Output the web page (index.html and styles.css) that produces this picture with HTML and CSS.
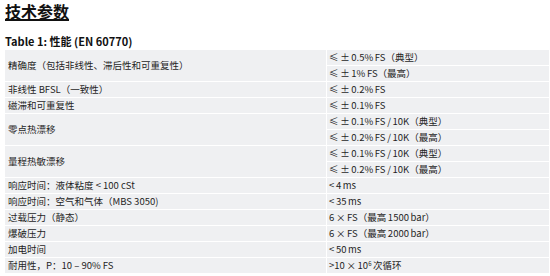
FILE: index.html
```html
<!DOCTYPE html>
<html lang="zh">
<head>
<meta charset="utf-8">
<link rel="stylesheet" href="styles.css">
</head>
<body>
<h1 class="title">技术参数</h1>
<h2 class="caption">Table 1: 性能 (EN 60770)</h2>
<table class="spec">
  <tbody>
    <tr><td class="name" rowspan="2">精确度（包括非线性、滞后性和可重复性）</td><td class="val">≤ ± 0.5% FS（典型）</td></tr>
    <tr><td class="val">≤ ± 1% FS（最高）</td></tr>
    <tr><td class="name">非线性 BFSL（一致性）</td><td class="val">≤ ± 0.2% FS</td></tr>
    <tr><td class="name">磁滞和可重复性</td><td class="val">≤ ± 0.1% FS</td></tr>
    <tr><td class="name" rowspan="2">零点热漂移</td><td class="val">≤ ± 0.1% FS / 10K（典型）</td></tr>
    <tr><td class="val">≤ ± 0.2% FS / 10K（最高）</td></tr>
    <tr><td class="name" rowspan="2">量程热敏漂移</td><td class="val">≤ ± 0.1% FS / 10K（典型）</td></tr>
    <tr><td class="val">≤ ± 0.2% FS / 10K（最高）</td></tr>
    <tr><td class="name">响应时间：液体粘度 &lt; 100 cSt</td><td class="val">&lt; 4 ms</td></tr>
    <tr><td class="name">响应时间：空气和气体（MBS 3050)</td><td class="val">&lt; 35 ms</td></tr>
    <tr><td class="name">过载压力（静态）</td><td class="val">6 × FS（最高 1500 bar）</td></tr>
    <tr><td class="name">爆破压力</td><td class="val">6 × FS（最高 2000 bar）</td></tr>
    <tr><td class="name">加电时间</td><td class="val">&lt; 50 ms</td></tr>
    <tr><td class="name">耐用性，P：10 – 90% FS</td><td class="val">&gt;10 × 10<sup>6</sup> 次循环</td></tr>
  </tbody>
</table>
</body>
</html>
```
FILE: styles.css
```css
html, body {
  margin: 0;
  padding: 0;
  background: #ffffff;
}
body {
  padding: 0 0 0 5px;
  font-family: "Noto Sans CJK SC", "Noto Sans", sans-serif;
  color: #1f1f1f;
}
.title {
  margin: 0;
  padding-top: 1px;
  font-size: 16px;
  line-height: 20px;
  font-weight: 700;
  text-decoration: underline;
  text-decoration-thickness: 2px;
  text-underline-offset: 1px;
  color: #111;
}
.caption {
  margin: 0;
  padding-top: 13px;
  font-size: 11px;
  line-height: 14px;
  font-weight: 700;
  color: #111;
  height: 16px;
}
.spec {
  width: 544px;
  border-collapse: collapse;
  background: #eff0f2;
  font-size: 9.5px;
}
.spec td {
  height: 15px;
  padding: 0 3px;
  line-height: 15px;
  border-bottom: 1px solid #ffffff;
  white-space: nowrap;
  vertical-align: middle;
}
.spec td.name {
  width: 315px;
  border-right: 1px solid #ffffff;
}
.spec td.val {
  padding-left: 2px;
  word-spacing: -0.5px;
}
.spec sup {
  font-size: 6px;
  line-height: 0;
  vertical-align: 3px;
}
```
